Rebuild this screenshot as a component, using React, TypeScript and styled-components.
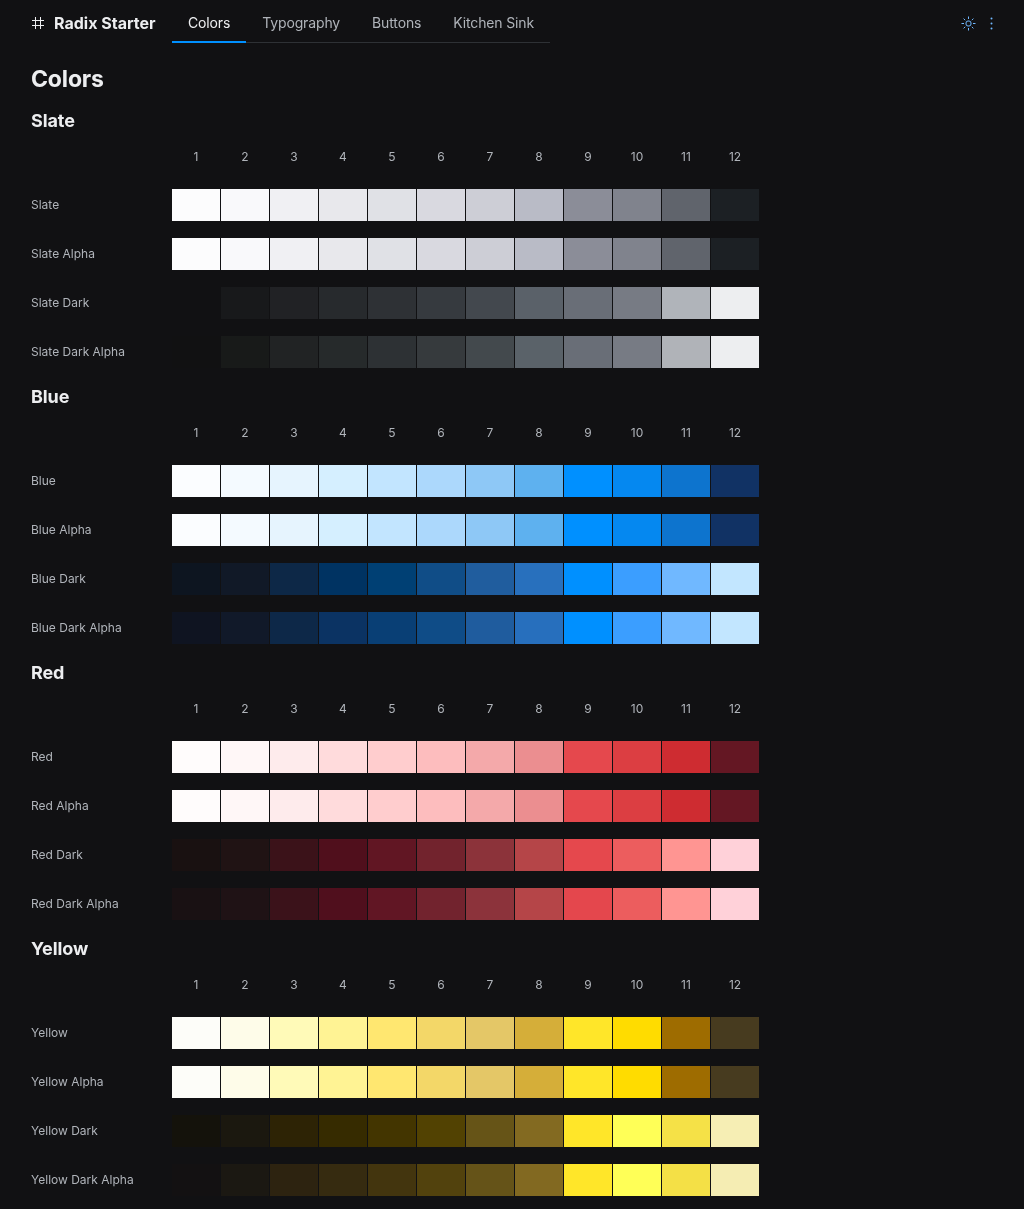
import styled, { createGlobalStyle } from "styled-components";

const GlobalStyle = createGlobalStyle`
  html, body {
    margin: 0;
    padding: 0;
    background: #111113;
  }
  body {
    font-family: Inter, "Liberation Sans", sans-serif;
    color: #edeef0;
    -webkit-font-smoothing: antialiased;
  }
  #root {
    will-change: transform;
  }
`;

const NAV_ITEMS = ["Colors", "Typography", "Buttons", "Kitchen Sink"];
const STEPS = [1, 2, 3, 4, 5, 6, 7, 8, 9, 10, 11, 12];

const SCALES = [
  {
    name: "Slate",
    light: ["#fcfcfd", "#f9f9fb", "#f0f0f3", "#e8e8ec", "#e0e1e6", "#d9d9e0", "#cdced6", "#b9bbc6", "#8b8d98", "#80838d", "#60646c", "#1c2024"],
    dark: ["#111113", "#18191b", "#212225", "#272a2d", "#2e3135", "#363a3f", "#43484e", "#5a6169", "#696e77", "#777b84", "#b0b4ba", "#edeef0"],
    darkAlpha: ["#111112", "#181a19", "#212324", "#262a2b", "#2d3134", "#363a3d", "#43494d", "#5a6269", "#696e77", "#777b84", "#b0b3b8", "#edeef0"],
  },
  {
    name: "Blue",
    light: ["#fbfdff", "#f4faff", "#e6f4fe", "#d5efff", "#c2e5ff", "#acd8fc", "#8ec8f6", "#5eb1ef", "#0090ff", "#0588f0", "#0d74ce", "#113264"],
    dark: ["#0d1520", "#111927", "#0d2847", "#003362", "#004074", "#104d87", "#205d9e", "#2870bd", "#0090ff", "#3b9eff", "#70b8ff", "#c2e6ff"],
    darkAlpha: ["#004df211", "#1166fb18", "#0077ff3a", "#0075ff57", "#0081fd6b", "#0f89fd7f", "#2a91fe98", "#3094feb9", "#0090ff", "#3b9eff", "#70b8ff", "#c2e6ff"],
  },
  {
    name: "Red",
    light: ["#fffcfc", "#fff7f7", "#feebec", "#ffdbdc", "#ffcdce", "#fdbdbe", "#f4a9aa", "#eb8e90", "#e5484d", "#dc3e42", "#ce2c31", "#641723"],
    dark: ["#191111", "#201314", "#3b1219", "#500f1c", "#611623", "#72232d", "#8c333a", "#b54548", "#e5484d", "#ec5d5e", "#ff9592", "#ffd1d9"],
    darkAlpha: ["#f4121209", "#f22f3e11", "#ff173f2d", "#fe0a3b44", "#ff204756", "#ff3e5668", "#ff536184", "#ff5d61b0", "#fe4e54e4", "#ff6465eb", "#ff9592", "#ffd1d9"],
  },
  {
    name: "Yellow",
    light: ["#fdfdf9", "#fefce9", "#fffab8", "#fff394", "#ffe770", "#f3d768", "#e4c767", "#d5ae39", "#ffe629", "#ffdc00", "#9e6c00", "#473b1f"],
    dark: ["#14120b", "#1b180f", "#2d2305", "#362b00", "#433500", "#524202", "#665417", "#836a21", "#ffe629", "#ffff57", "#f5e147", "#f6eeb4"],
    darkAlpha: ["#d1510004", "#f9b4000b", "#ffaa001e", "#fdb70028", "#febb0036", "#fec40046", "#fdcb225c", "#fdca327b", "#ffe629", "#ffff57", "#fee949f5", "#fef6baf6"],
  },
];

const App = () => {
  return (
    <Page>
      <GlobalStyle />
      <Header>
        <Logo>
          <HashMark />
          <LogoText>Radix Starter</LogoText>
        </Logo>
        <TabList>
          {NAV_ITEMS.map((item, index) => (
            <Tab key={item} $active={index === 0}>
              {item}
            </Tab>
          ))}
        </TabList>
        <HeaderActions>
          <IconButton aria-label="Toggle theme">
            <SunMark />
          </IconButton>
          <IconButton aria-label="More">
            <DotsMark />
          </IconButton>
        </HeaderActions>
      </Header>
      <Main>
        <PageTitle>Colors</PageTitle>
        {SCALES.map((scale) => (
          <Section key={scale.name}>
            <SectionTitle>{scale.name}</SectionTitle>
            <ScaleGrid>
              <span />
              {STEPS.map((step) => (
                <StepNumber key={step}>{step}</StepNumber>
              ))}
              <ScaleRow label={scale.name} colors={scale.light} />
              <ScaleRow label={`${scale.name} Alpha`} colors={scale.light} />
              <ScaleRow label={`${scale.name} Dark`} colors={scale.dark} />
              <ScaleRow label={`${scale.name} Dark Alpha`} colors={scale.darkAlpha} />
            </ScaleGrid>
          </Section>
        ))}
      </Main>
    </Page>
  );
};

const ScaleRow = ({ label, colors }: { label: string; colors: string[] }) => (
  <>
    <RowLabel>{label}</RowLabel>
    {colors.map((color, index) => (
      <Swatch key={index} $color={color} />
    ))}
  </>
);

const HashMark = () => (
  <svg width="15" height="17" viewBox="0 0 15 17" fill="none">
    <path d="M5.5 3v12M10.5 3v12M2 6.5h12M2 11.5h12" stroke="#edeef0" strokeWidth="1" />
  </svg>
);

const SunMark = () => (
  <svg width="15" height="15" viewBox="0 0 15 15" fill="none" stroke="#70b8ff">
    <rect x="5" y="5" width="5" height="5" rx="2" />
    <path d="M7.5 0.5v2.5M7.5 12v2.5M0.5 7.5h2.5M12 7.5h2.5M2.6 2.6l1.6 1.6M10.8 10.8l1.6 1.6M2.6 12.4l1.6-1.6M10.8 4.2l1.6-1.6" />
  </svg>
);

const DotsMark = () => (
  <svg width="15" height="15" viewBox="0 0 15 15" fill="#70b8ff">
    <circle cx="7.5" cy="2.5" r="1" />
    <circle cx="7.5" cy="7.5" r="1" />
    <circle cx="7.5" cy="12.5" r="1" />
  </svg>
);

const Page = styled.div`
  min-height: 1209px;
`;

const Header = styled.header`
  display: flex;
  align-items: flex-end;
  height: 43px;
  padding: 0 25px 0 31px;
`;

const Logo = styled.div`
  display: flex;
  align-items: center;
  gap: 9px;
  width: 142px;
  height: 43px;
  margin-left: -1px;
  padding-top: 2px;
  box-sizing: border-box;
`;

const LogoText = styled.span`
  font-size: 16px;
  font-weight: 700;
  white-space: nowrap;
`;

const TabList = styled.nav`
  display: flex;
  box-shadow: inset 0 -1px 0 #2e3135;
`;

const Tab = styled.div<{ $active: boolean }>`
  height: 43px;
  line-height: 45px;
  padding: 0 16px;
  font-size: 14px;
  font-weight: 400;
  letter-spacing: -0.14px;
  color: ${(props) => (props.$active ? "#edeef0" : "#b0b4ba")};
  box-shadow: ${(props) => (props.$active ? "inset 0 -2px 0 #0090ff" : "none")};
  box-sizing: border-box;
`;

const HeaderActions = styled.div`
  display: flex;
  align-items: center;
  gap: 8px;
  height: 43px;
  margin-left: auto;
  padding-top: 4px;
  box-sizing: border-box;
`;

const IconButton = styled.button`
  display: flex;
  padding: 0;
  border: 0;
  background: none;
  cursor: pointer;
`;

const Main = styled.main`
  padding: 21px 31px 0;
`;

const PageTitle = styled.h1`
  margin: 0 0 12px;
  font-size: 23px;
  line-height: 31px;
  font-weight: 700;
  letter-spacing: -0.15px;
`;

const Section = styled.section`
  margin-bottom: 16px;

  &:first-of-type {
    margin-top: 13px;
  }
`;

const SectionTitle = styled.h2`
  margin: 0 0 6px;
  font-size: 18px;
  line-height: 26px;
  font-weight: 700;
  letter-spacing: -0.1px;
`;

const ScaleGrid = styled.div`
  display: grid;
  grid-template-columns: 140px repeat(12, 48px);
  grid-auto-rows: 32px;
  column-gap: 1px;
  row-gap: 17px;
  align-items: center;
`;

const StepNumber = styled.span`
  padding-top: 2px;
  font-size: 12px;
  line-height: 30px;
  text-align: center;
  color: #b0b4ba;
`;

const RowLabel = styled.span`
  font-size: 12px;
  line-height: 16px;
  color: #b0b4ba;
`;

const Swatch = styled.div<{ $color: string }>`
  height: 32px;
  background: ${(props) => props.$color};
`;

export default App;
